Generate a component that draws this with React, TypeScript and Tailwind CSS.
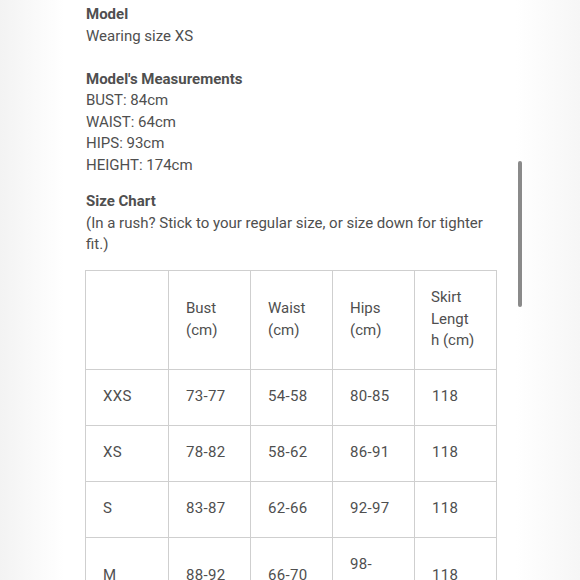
import React from "react";

const rows = [
  ["XXS", "73-77", "54-58", "80-85", "118"],
  ["XS", "78-82", "58-62", "86-91", "118"],
  ["S", "83-87", "62-66", "92-97", "118"],
  ["M", "88-92", "66-70", "98-103", "118"],
];

export default function App() {
  return (
    <div
      className="relative h-[580px] w-[580px] overflow-hidden bg-[linear-gradient(to_right,#f3f3f3,#ffffff_11%,#ffffff_89%,#f6f6f6)] text-[15px] leading-[21.5px] text-[#4f4f4f]"
      style={{ fontFamily: "Roboto, 'Liberation Sans', sans-serif" }}
    >
      <div className="pl-[86px] pr-[84px] pt-[4px]">
        {/* model */}
        <p className="font-bold">Model</p>
        <p>Wearing size XS</p>
        <br />
        <p className="font-bold">Model's Measurements</p>
        <p>BUST: 84cm</p>
        <p>WAIST: 64cm</p>
        <p>HIPS: 93cm</p>
        <p>HEIGHT: 174cm</p>

        {/* size chart */}
        <p className="mt-[15px] font-bold">Size Chart</p>
        <p>(In a rush? Stick to your regular size, or size down for tighter fit.)</p>

        <table className="mt-[14px] -ml-px w-[412px] table-fixed border-collapse">
          <colgroup>
            <col className="w-[83px]" />
            <col className="w-[82px]" />
            <col className="w-[82px]" />
            <col className="w-[82px]" />
            <col className="w-[82px]" />
          </colgroup>
          <tbody>
            <tr>
              <td className="border border-[#cfcfcf] px-[17px] py-[16.75px]"></td>
              <td className="border border-[#cfcfcf] px-[17px] py-[16.75px] align-middle">Bust (cm)</td>
              <td className="border border-[#cfcfcf] px-[17px] py-[16.75px] align-middle">Waist (cm)</td>
              <td className="border border-[#cfcfcf] px-[17px] py-[16.75px] align-middle">Hips (cm)</td>
              <td className="border border-[#cfcfcf] pl-[16px] pr-[10px] py-[16.75px] align-middle whitespace-nowrap">
                Skirt
                <br />
                Lengt
                <br />h (cm)
              </td>
            </tr>
            {rows.map((r) => (
              <tr key={r[0]}>
                {r.map((c, i) => (
                  <td
                    key={i}
                    className="border border-[#cfcfcf] px-[17px] py-[16.75px] align-middle break-words tracking-[0.3px]"
                  >
                    {c}
                  </td>
                ))}
              </tr>
            ))}
          </tbody>
        </table>
      </div>

      {/* scrollbar thumb */}
      <div className="absolute left-[518px] top-[161px] h-[146px] w-[4px] rounded-full bg-[#8a8a8a]" />
    </div>
  );
}
